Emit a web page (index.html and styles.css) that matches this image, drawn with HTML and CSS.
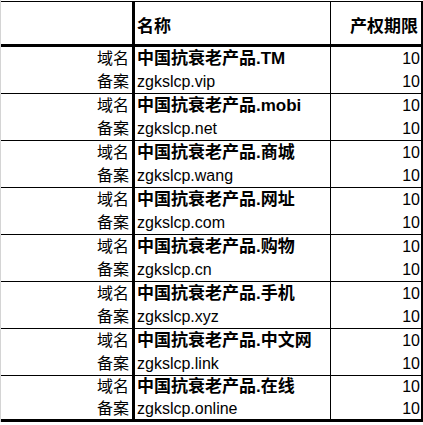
FILE: index.html
```html
<!DOCTYPE html>
<html lang="zh-CN">
<head>
<meta charset="utf-8">
<title>域名列表</title>
<link rel="stylesheet" href="styles.css">
</head>
<body>
<div class="sheet">
<table class="grid">
  <colgroup><col class="c1"><col class="c2"><col class="c3"></colgroup>
  <thead>
    <tr class="head"><th class="lab"></th><th class="name">名称</th><th class="num">产权期限</th></tr>
  </thead>
  <tbody>
    <tr><td class="lab">域名</td><td class="name b">中国抗衰老产品.TM</td><td class="num">10</td></tr>
    <tr class="end"><td class="lab">备案</td><td class="name">zgkslcp.vip</td><td class="num">10</td></tr>
    <tr><td class="lab">域名</td><td class="name b">中国抗衰老产品.mobi</td><td class="num">10</td></tr>
    <tr class="end"><td class="lab">备案</td><td class="name">zgkslcp.net</td><td class="num">10</td></tr>
    <tr><td class="lab">域名</td><td class="name b">中国抗衰老产品.商城</td><td class="num">10</td></tr>
    <tr class="end"><td class="lab">备案</td><td class="name">zgkslcp.wang</td><td class="num">10</td></tr>
    <tr><td class="lab">域名</td><td class="name b">中国抗衰老产品.网址</td><td class="num">10</td></tr>
    <tr class="end"><td class="lab">备案</td><td class="name">zgkslcp.com</td><td class="num">10</td></tr>
    <tr><td class="lab">域名</td><td class="name b">中国抗衰老产品.购物</td><td class="num">10</td></tr>
    <tr class="end"><td class="lab">备案</td><td class="name">zgkslcp.cn</td><td class="num">10</td></tr>
    <tr><td class="lab">域名</td><td class="name b">中国抗衰老产品.手机</td><td class="num">10</td></tr>
    <tr class="end"><td class="lab">备案</td><td class="name">zgkslcp.xyz</td><td class="num">10</td></tr>
    <tr><td class="lab">域名</td><td class="name b">中国抗衰老产品.中文网</td><td class="num">10</td></tr>
    <tr class="end"><td class="lab">备案</td><td class="name">zgkslcp.link</td><td class="num">10</td></tr>
    <tr class="last1"><td class="lab">域名</td><td class="name b">中国抗衰老产品.在线</td><td class="num">10</td></tr>
    <tr class="last2"><td class="lab">备案</td><td class="name">zgkslcp.online</td><td class="num">10</td></tr>
  </tbody>
</table>
</div>
</body>
</html>
```

FILE: styles.css
```css
html, body {
  margin: 0;
  padding: 0;
  background: #ffffff;
}
body {
  font-family: "Liberation Sans", "Noto Sans CJK SC", sans-serif;
  color: #000;
  width: 423px;
  height: 425px;
  overflow: hidden;
}
.sheet {
  border-left: 1px solid #d4d4d4;
  padding-top: 1px;
  width: 422px;
}
.grid {
  border-collapse: separate;
  border-spacing: 0;
  table-layout: fixed;
  width: 422px;
  border-top: 1px solid #000;
  border-right: 2px solid #000;
  border-bottom: 3px solid #000;
}
.c1 { width: 134px; }
.c2 { width: 196px; }
.c3 { width: 90px; }
.grid th, .grid td {
  padding: 0;
  height: 23px;
  line-height: 23px;
  vertical-align: middle;
  white-space: nowrap;
  overflow: hidden;
  font-size: 16px;
  font-weight: normal;
}
.grid .lab {
  text-align: right;
  padding-right: 3px;
  border-right: 3px solid #000;
}
.grid .name {
  text-align: left;
  padding-left: 2px;
  border-right: 1px solid #000;
}
.grid .num {
  text-align: right;
  padding-right: 1px;
}
.grid .b {
  font-weight: bold;
  font-size: 17px;
}
.head th {
  height: 45px;
  line-height: 23px;
  padding-top: 6px;
  box-sizing: border-box;
  border-bottom: 3px solid #000;
  font-weight: bold;
  font-size: 17px;
}
.head th.num {
  padding-right: 3px;
}
.end td {
  border-bottom: 1px solid #000;
}
.last1 td { height: 22px; line-height: 22px; }
.last2 td { height: 21px; line-height: 21px; }
```
